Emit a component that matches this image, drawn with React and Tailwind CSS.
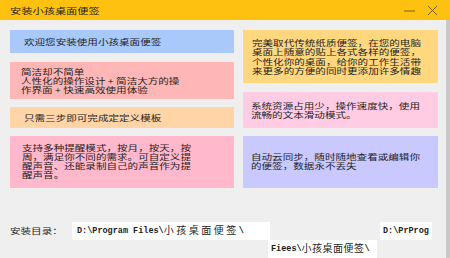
function T({ children, className = "" }) {
  return <div className={"origin-left scale-x-[1.32] whitespace-nowrap " + className}>{children}</div>;
}

export default function App() {
  const cjk = { fontFamily: '"Noto Sans CJK SC", "Noto Sans", sans-serif' };
  const mono = { fontFamily: '"Liberation Mono", "Noto Sans CJK SC", monospace' };
  return (
    <div className="w-[450px] h-[258px] overflow-hidden bg-[#efefef] flex flex-col text-[#1e1e1e]" style={cjk}>
      <div className="h-[20px] shrink-0 bg-[#ffc10f] flex items-center pl-[10px] pr-[12px]">
        <T className="text-[8.5px] leading-none">安装小孩桌面便签</T>
        <div className="ml-auto flex items-center gap-[12px] text-[#7a6320]">
          <svg width="11" height="11" viewBox="0 0 11 11"><line x1="0" y1="6" x2="11" y2="6" stroke="currentColor" strokeWidth="1" /></svg>
          <svg width="11" height="11" viewBox="0 0 11 11"><path d="M1 1 L10 10 M10 1 L1 10" stroke="currentColor" strokeWidth="1" /></svg>
        </div>
      </div>
      <div className="flex-1 flex">
        <div className="flex-1 flex flex-col">
          <div className="flex gap-[9px] pl-[10px] pt-[10px]">
            <div className="w-[224px] flex flex-col gap-[8px] text-[8px] leading-[9px]">
              <div className="h-[23px] bg-[#a9c9fb] flex items-center pl-[14px]"><T>欢迎您安装使用小孩桌面便签</T></div>
              <div className="h-[37px] mt-[1px] bg-[#ffb6b6] pl-[11px] pt-[5px]">
                <T>简洁却不简单</T>
                <T>人性化的操作设计 + 简洁大方的操</T>
                <T>作界面 + 快速高效使用体验</T>
              </div>
              <div className="h-[21px] bg-[#ffd4a6] flex items-center pl-[14px]"><T>只需三步即可完成定定义模板</T></div>
              <div className="h-[52px] bg-[#ffb8cc] pl-[12px] pt-[7px]">
                <T>支持多种提醒模式，按月，按天，按</T>
                <T>周，满足你不同的需求。可自定义提</T>
                <T>醒声音、还能录制自己的声音作为提</T>
                <T>醒声音。</T>
              </div>
            </div>
            <div className="w-[195px] flex flex-col gap-[8px] text-[8px] leading-[9px]">
              <div className="h-[53px] bg-[#ffd77f] pl-[9px] pt-[8px] leading-[9.4px]">
                <T>完美取代传统纸质便签，在您的电脑</T>
                <T>桌面上随意的贴上各式各样的便签，</T>
                <T>个性化你的桌面，给你的工作生活带</T>
                <T>来更多的方便的同时更添加许多情趣</T>
              </div>
              <div className="h-[36px] mt-[1px] bg-[#ffcce4] pl-[8px] pt-[9px]">
                <T>系统资源占用少，操作速度快，使用</T>
                <T>流畅的文本滑动模式。</T>
              </div>
              <div className="h-[52px] bg-[#c9c8ff] pl-[8px] pt-[16px]">
                <T>自动云同步，随时随地查看或编辑你</T>
                <T>的便签，数据永不丢失</T>
              </div>
            </div>
          </div>
          <div className="mt-[34px] flex flex-col">
            <div className="flex items-center h-[18px]">
              <div className="pl-[10px] w-[72px]"><T className="text-[8px] leading-none">安装目录：</T></div>
              <div className="w-[198px] h-[18px] bg-white flex items-center pl-[5px] text-[8.5px] font-bold whitespace-nowrap overflow-hidden" style={mono}>
                D:\Program Files\<span className="text-[10px] font-normal tracking-[2.5px]">小孩桌面便签</span>\
              </div>
              <div className="ml-[110px] w-[52px] h-[18px] bg-white flex items-center pl-[3px] text-[8.5px] font-bold whitespace-nowrap overflow-hidden" style={mono}>
                D:\PrProg
              </div>
            </div>
            <div className="ml-[268px] w-[109px] h-[18px] bg-white flex items-center pl-[3px] text-[8.5px] font-bold whitespace-nowrap overflow-hidden" style={mono}>
              Fiees\<span className="text-[10px] font-normal tracking-[0.5px]">小孩桌面便签</span>\
            </div>
          </div>
        </div>
        <div className="w-[4px] bg-[#c8c8c8]" />
      </div>
    </div>
  );
}
